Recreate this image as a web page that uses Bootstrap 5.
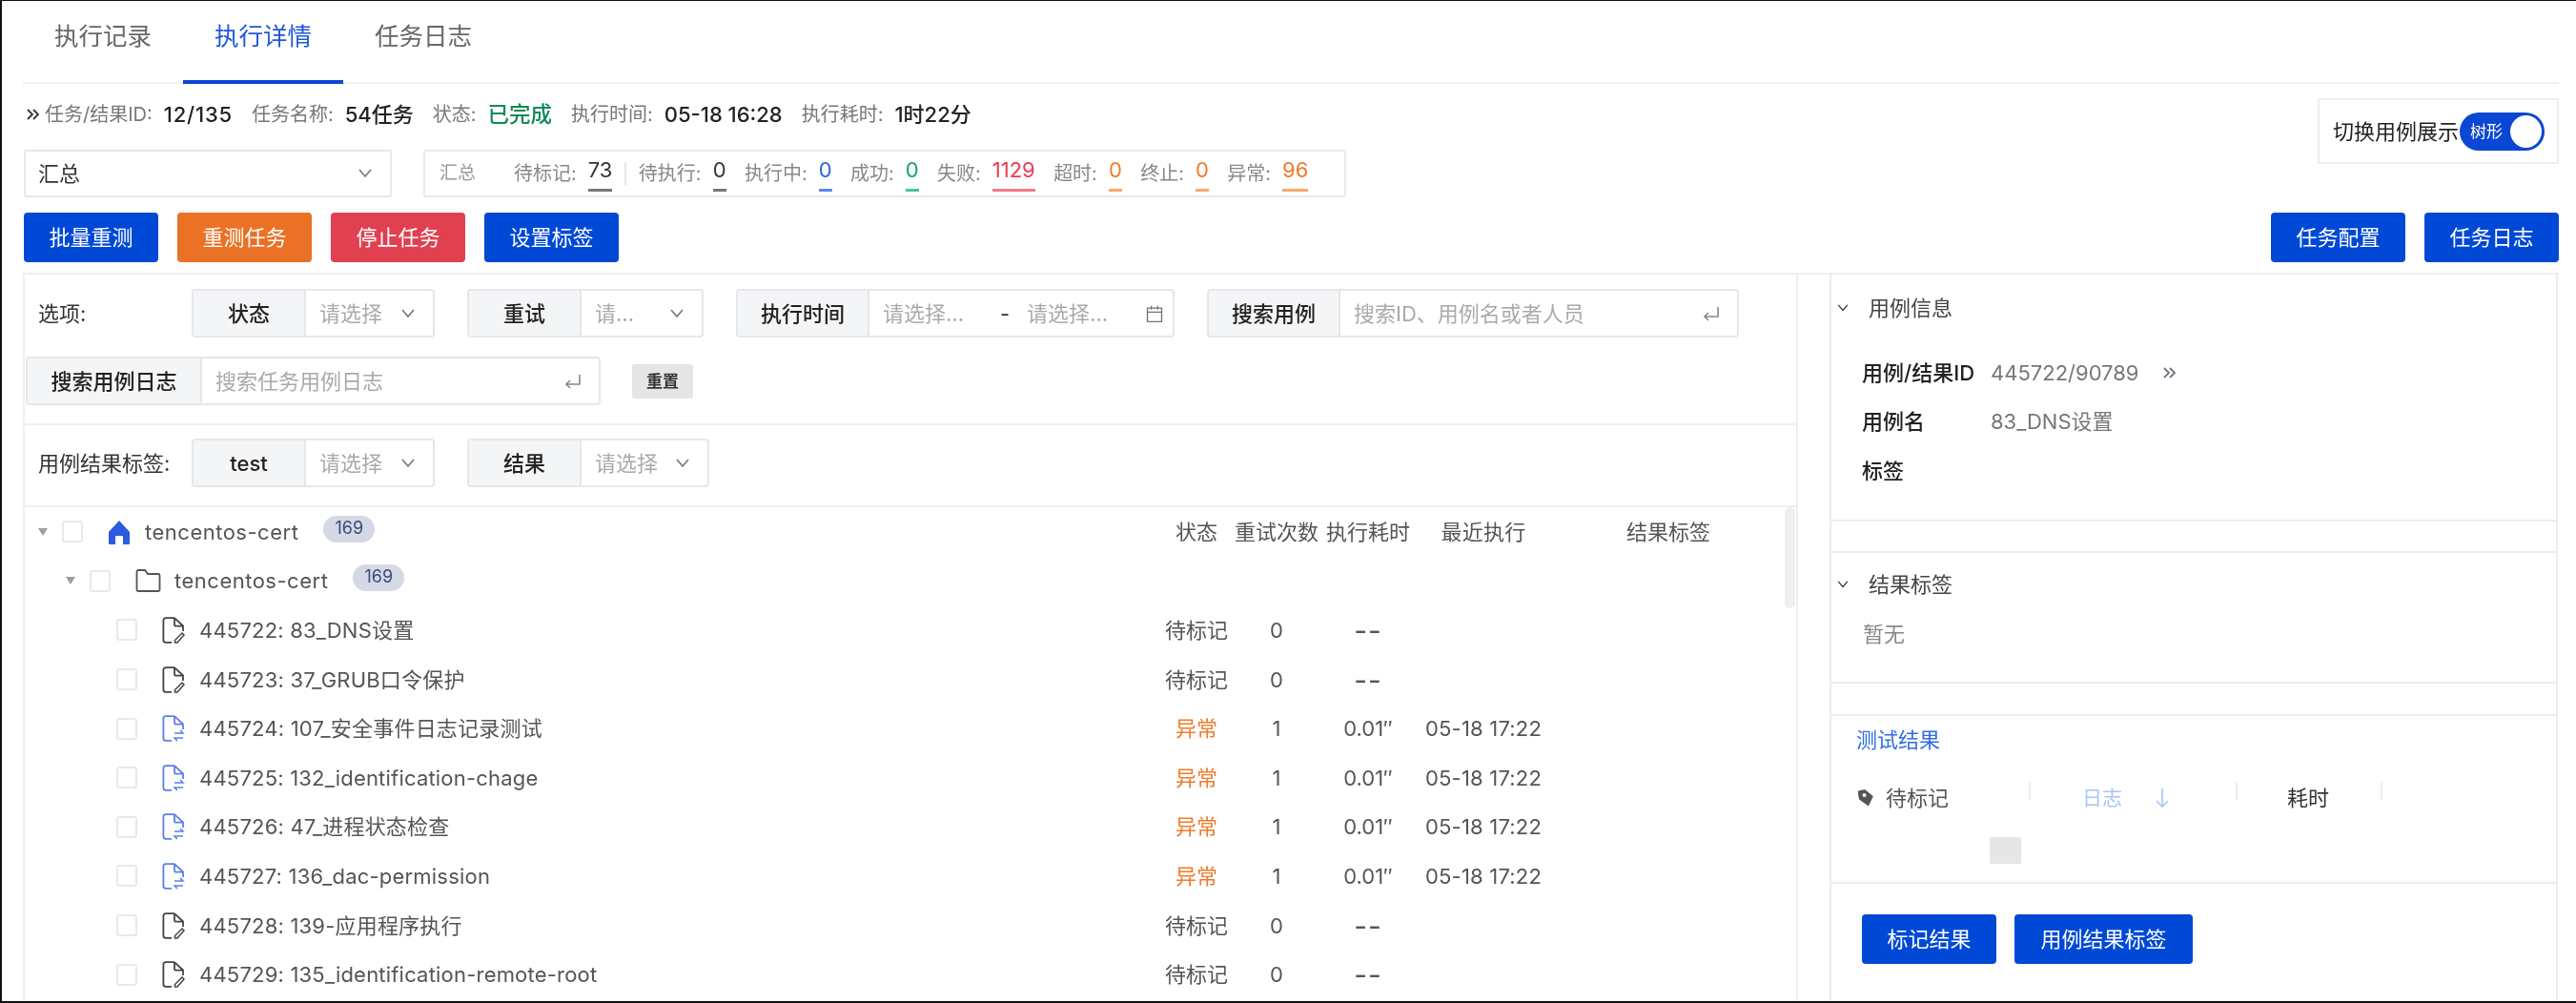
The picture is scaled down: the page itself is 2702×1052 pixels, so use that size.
<!DOCTYPE html>
<html lang="zh-CN">
<head>
<meta charset="utf-8">
<title>执行详情</title>
<link href="https://cdn.jsdelivr.net/npm/bootstrap@5.3.0/dist/css/bootstrap.min.css" rel="stylesheet">
<style>
html,body{margin:0;background:#fff;overflow:hidden}
body{font-family:Inter,"Noto Sans CJK SC",sans-serif;font-size:22px;color:#333;line-height:30px}
.frame{width:2702px;height:1052px;box-sizing:border-box;border-top:1px solid #111;border-left:2px solid #111;border-bottom:2px solid #111;padding:0 18px 0 22px;overflow:hidden;filter:blur(.55px)}
.tabbar{height:87px;border-bottom:2px solid #f0f0f0;flex-wrap:nowrap}
.tabbar .nav-link{width:168px;height:87px;padding:22px 0 0;text-align:center;font-size:25.5px;color:#666;line-height:30px;background:none;border:0;border-radius:0}
.tabbar .nav-link.active{color:#1f58d8;border-bottom:4px solid #0a47d4}
.head-zone{height:200px;border-bottom:2px solid #efefef}
.info-row{height:30px;margin-top:17px;margin-bottom:22px;font-size:20px;color:#777;padding-left:3px}
.info-row b{font-size:22px;font-weight:500;color:#222;margin:0 20px 0 12px}
.info-row b.ok{color:#128a58;font-size:22.5px}
.info-row b.v-wide{letter-spacing:.8px}
.chev-2{width:16px;height:16px;margin-right:4px;color:#333}
.sel-box{width:386px;height:50px;margin-left:1px;border:2px solid #e6e7ea;border-radius:3px;padding:0 16px 0 13px;color:#333}
.stat-box{width:968px;height:50px;margin-left:33px;border:2px solid #e9eaed;border-radius:2px;padding:0 0 0 15px;font-size:20px;color:#888}
.stat-box .first{margin-right:40px;font-size:19px;color:#999}
.stat-item{margin-right:19.4px;white-space:nowrap}
.stat-num{font-size:22px;color:#333;margin-left:12px;line-height:30px;padding-bottom:5px;border-bottom:3px solid #777}
.stat-num.c-blue{color:#2b66e0;border-color:#5b87ee}
.stat-num.c-green{color:#12a56f;border-color:#4ac49a}
.stat-num.c-red{color:#ea3c53;border-color:#f4798a}
.stat-num.c-orange{color:#f07b2c;border-color:#f9a86c}
.stat-sep{width:2px;height:24px;background:#e8e8e8;margin:0 13px 0 -7px}
.toggle-box{width:253px;height:69px;margin-top:15px;border:2px solid #eeeeee;padding:0 11px 0 14px;color:#222;white-space:nowrap}
.toggle-txt{width:133px;font-size:22px;flex:none}
.sw-pill{width:89px;height:40px;background:#0a47d4;color:#fff;font-size:17px;padding:0 3px 0 11px;flex:none}
.sw-knob{width:33px;height:34px;background:#fff;border-radius:50%;margin-left:auto}
.act-row{height:52px;margin-top:16px}
.act-btn{width:141px;height:52px;padding:0;border:0;border-radius:4px;color:#fff;font-size:22px;line-height:52px}
.act-btn:hover{color:#fff}
.b-blue{background:#0049d6}.b-orange{background:#ea7126}.b-red{background:#e04050}
.act-gap{gap:20px}
.act-left{margin-left:1px}
.main-zone{height:762px}
.left-pane{width:1862px;border-left:2px solid #f0f0f0;border-right:2px solid #eeeeee;position:relative;flex:none}
.right-pane{width:764px;margin-left:33px;border-left:2px solid #ebedf0;border-right:2px solid #ebedf0;flex:none}
.f-line{padding-left:14px;height:51px}
.f-first{margin-top:15px}
.f-second{margin-top:20px;padding-left:1px}
.f-third{margin-top:14px}
.f-lab{width:127px;color:#333;flex:none;white-space:nowrap}
.grp{height:51px;flex-wrap:nowrap;width:auto;border:2px solid #e6e7ea;border-radius:4px;overflow:hidden}
.grp-add{width:118px;height:100%;background:#f4f5f6;border-right:2px solid #e6e7ea;color:#222;font-weight:500;flex:none}
.grp-ph{color:#aaa;padding:0 14px;white-space:nowrap;flex:1 1 auto}
.grp-ph2{color:#aaa;padding:0 14px 0 18px;white-space:nowrap;flex:1 1 auto}
.w-status{width:255px}.w-retry{width:248px}.w-tag{width:255px}.w-res{width:254px}
.w-time{width:460px}.w-search{width:558px}.w-log{width:603px}
.w-add-140{width:138px}.w-add-185{width:183px}
.chev{width:20px;height:14px;color:#777;flex:none}
.ent{width:22px;height:20px;color:#888;flex:none}
.gap-g{gap:34px}
.reset{width:64px;height:36px;background:#e5e5e5;color:#333;font-size:17px;font-weight:600;border-radius:3px;margin-left:33px;border:0;padding:0;line-height:36px}
.rule{height:2px;background:#efefef}
.rule-a{margin-top:19px}
.rule-b{margin-top:19px}
.tree{position:relative}
.t-row{height:51.6px}
.t-name{width:1189px;flex:none;color:#555;white-space:nowrap;letter-spacing:.2px}
.t-root{letter-spacing:.5px}
.t-c1{width:80px;text-align:center;color:#555;flex:none}
.t-c2{width:88px;text-align:center;color:#555;flex:none}
.t-c3{width:104px;text-align:center;color:#555;flex:none}
.t-c4{width:138px;text-align:center;color:#555;flex:none;white-space:nowrap;letter-spacing:.2px}
.t-c5{width:250px;text-align:center;color:#555;flex:none}
.t-dash{font-size:30px;letter-spacing:1px}
.c-warn{color:#f07b2c}
.caret{width:0;height:0;border-left:5px solid transparent;border-right:5px solid transparent;border-top:8px solid #9a9ea6;flex:none}
.tick{width:22px;height:23px;border:2px solid #e9e9ec;border-radius:3px;background:#fff;flex:none}
.ind-0{padding-left:14px}.ind-1{padding-left:43px}.ind-2{padding-left:96px}
.gap-cb{margin-left:15px}
.ico{width:24px;height:28px;flex:none;margin-left:26px;margin-right:15px}
.ico-f{width:27px;margin-right:14px}
.pill-n{width:54px;height:28px;border-radius:14px;background:#d5d9e6;color:#3c4a78;font-size:18px;margin-left:26px;position:relative;top:-3px;line-height:26px;text-align:center;letter-spacing:0}
.scroll-thumb{position:absolute;right:1px;top:0;width:11px;height:106px;background:#efefef;border-radius:5px}
.sec-1{height:259px;border-bottom:2px solid #ebedf0;padding-top:20px}
.sec-gap1{height:31px}
.sec-gap2{height:32px}
.sec-2{height:139px;border-top:2px solid #ebedf0;border-bottom:2px solid #ebedf0;padding-top:18px}
.sec-3{height:178px;border-top:2px solid #ebedf0;border-bottom:2px solid #ebedf0;padding-top:10px}
.sec-4{padding:32px 0 0 32px}
.sec-head{padding-left:4px;gap:19px;color:#444}
.chev-s{width:16px;height:12px;color:#333;flex:none}
.kv{height:51.5px;padding-left:32px}
.kv-l{width:135px;color:#222;font-weight:500;flex:none;white-space:nowrap}
.kv-v{color:#777;white-space:nowrap}
.kv-first{margin-top:27px}
.none-txt{margin-top:22px;padding-left:33px;color:#888}
.res-title{padding-left:26px;color:#2f6ce5}
.res-row{margin-top:31px;padding-left:26px;height:30px}
.res-c1{width:181px;color:#555;gap:12px;padding-left:2px}
.res-c2{width:215px;padding-left:54px;color:#a9c5f7;font-size:21px}
.res-c3{width:150px;padding-left:52px;color:#333}
.res-vs{width:2px;height:19px;background:#eeeeee;align-self:flex-start;margin-top:-2px;flex:none}
.tag-i{width:17px;height:20px;color:#555;flex:none}
.arr-i{width:16px;height:24px;color:#a9c5f7;margin-left:34px;flex:none}
.sq{width:33px;height:28px;background:#e6e6e6;margin:26px 0 0 166px}
.b-gap{gap:19px}
.w-141{width:141px}.w-187{width:187px}
</style>
</head>
<body>
<svg class="d-none">
<symbol id="s-chev" viewBox="0 0 20 14"><path d="M4 3l6 7 6-7" fill="none" stroke="currentColor" stroke-width="1.6"/></symbol>
<symbol id="s-ent" viewBox="0 0 22 20"><path d="M18 3v10H4M8 9l-4 4 4 4" fill="none" stroke="currentColor" stroke-width="1.6"/></symbol>
<symbol id="s-dbl" viewBox="0 0 16 16"><path d="M2 3l5 5-5 5M8 3l5 5-5 5" fill="none" stroke="currentColor" stroke-width="1.8"/></symbol>
<symbol id="s-home" viewBox="0 0 24 28"><path d="M12 2L1 14v12a1 1 0 0 0 1 1h6v-8a1 1 0 0 1 1-1h6a1 1 0 0 1 1 1v8h6a1 1 0 0 0 1-1V14z" fill="#2b5ce0"/></symbol>
<symbol id="s-folder" viewBox="0 0 27 28"><path d="M1.500 4.500a1.500 1.500 0 0 1 1.500-1.500h7l3 4h11a1.500 1.500 0 0 1 1.500 1.500v15a1.500 1.500 0 0 1-1.500 1.500H3a1.500 1.500 0 0 1-1.500-1.500z" fill="none" stroke="#555" stroke-width="1.800"/></symbol>
<symbol id="s-file" viewBox="0 0 24 28"><path d="M13 1.200H4a2.600 2.600 0 0 0-2.600 2.600v20.400A2.600 2.600 0 0 0 4 26.800h6M13 1.200l9 8.300v5.500M13 1.200v6.500a2 2 0 0 0 2 2h7" fill="none" stroke="#444" stroke-width="1.800"/><path d="M21 17l2 2-7 8h-2.500v-2.500z" fill="none" stroke="#444" stroke-width="1.500"/></symbol>
<symbol id="s-fileb" viewBox="0 0 24 28"><path d="M13 1.200H4a2.600 2.600 0 0 0-2.600 2.600v20.400A2.600 2.600 0 0 0 4 26.800h6M13 1.200l9 8.300v5.500M13 1.200v6.500a2 2 0 0 0 2 2h7" fill="none" stroke="#5b80e8" stroke-width="1.800"/><path d="M13 19h9l-3-3M22 24h-9l3 3" fill="none" stroke="#5b80e8" stroke-width="1.500"/></symbol>
<symbol id="s-cal" viewBox="0 0 22 24"><path d="M2 5h18v17H2zM2 10h18M7 2v5M15 2v5" fill="none" stroke="currentColor" stroke-width="1.600"/></symbol>
<symbol id="s-tag" viewBox="0 0 17 20"><path d="M1 1h8l7 9-7 9-8-9z" fill="currentColor" transform="rotate(-12 8 10)"/><circle cx="6.500" cy="7" r="2" fill="#fff"/></symbol>
<symbol id="s-arr" viewBox="0 0 16 24"><path d="M8 2v19M2 15l6 6 6-6" fill="none" stroke="currentColor" stroke-width="1.600"/></symbol>
</svg>

<div class="frame">
  <ul class="nav tabbar">
    <li class="nav-item"><a class="nav-link" href="#">执行记录</a></li>
    <li class="nav-item"><a class="nav-link active" href="#">执行详情</a></li>
    <li class="nav-item"><a class="nav-link" href="#">任务日志</a></li>
  </ul>

  <div class="head-zone">
    <div class="d-flex justify-content-between">
      <div>
        <div class="info-row d-flex align-items-center">
          <svg class="chev-2"><use href="#s-dbl"/></svg><span>任务/结果ID:</span><b class="v-wide">12/135</b><span>任务名称:</span><b>54任务</b><span>状态:</span><b class="ok">已完成</b><span>执行时间:</span><b>05-18 16:28</b><span>执行耗时:</span><b>1时22分</b>
        </div>
        <div class="d-flex">
          <div class="sel-box d-flex align-items-center justify-content-between"><span>汇总</span><svg class="chev"><use href="#s-chev"/></svg></div>
          <div class="stat-box d-flex align-items-center">
            <span class="first">汇总</span>
            <span class="stat-item d-flex align-items-center">待标记:<span class="stat-num">73</span></span><span class="stat-sep"></span>
            <span class="stat-item d-flex align-items-center">待执行:<span class="stat-num">0</span></span>
            <span class="stat-item d-flex align-items-center">执行中:<span class="stat-num c-blue">0</span></span>
            <span class="stat-item d-flex align-items-center">成功:<span class="stat-num c-green">0</span></span>
            <span class="stat-item d-flex align-items-center">失败:<span class="stat-num c-red">1129</span></span>
            <span class="stat-item d-flex align-items-center">超时:<span class="stat-num c-orange">0</span></span>
            <span class="stat-item d-flex align-items-center">终止:<span class="stat-num c-orange">0</span></span>
            <span class="stat-item d-flex align-items-center">异常:<span class="stat-num c-orange">96</span></span>
          </div>
        </div>
      </div>
      <div class="toggle-box d-flex align-items-center">
        <span class="toggle-txt">切换用例展示</span>
        <span class="sw-pill rounded-pill d-flex align-items-center">树形<span class="sw-knob"></span></span>
      </div>
    </div>
    <div class="act-row d-flex justify-content-between">
      <div class="d-flex act-gap act-left">
        <button class="btn act-btn b-blue">批量重测</button>
        <button class="btn act-btn b-orange">重测任务</button>
        <button class="btn act-btn b-red">停止任务</button>
        <button class="btn act-btn b-blue">设置标签</button>
      </div>
      <div class="d-flex act-gap">
        <button class="btn act-btn b-blue">任务配置</button>
        <button class="btn act-btn b-blue">任务日志</button>
      </div>
    </div>
  </div>

  <div class="main-zone d-flex">
    <div class="left-pane">
      <div class="f-line f-first d-flex align-items-center gap-g">
        <span class="f-lab">选项:</span>
        <div class="grp w-status d-flex align-items-center"><span class="grp-add d-flex align-items-center justify-content-center">状态</span><span class="grp-ph">请选择</span><svg class="chev me-3"><use href="#s-chev"/></svg></div>
        <div class="grp w-retry d-flex align-items-center"><span class="grp-add d-flex align-items-center justify-content-center">重试</span><span class="grp-ph">请...</span><svg class="chev me-3"><use href="#s-chev"/></svg></div>
        <div class="grp w-time d-flex align-items-center"><span class="grp-add w-add-140 d-flex align-items-center justify-content-center">执行时间</span><span class="grp-ph">请选择...</span><span>-</span><span class="grp-ph2">请选择...</span><svg class="ent me-2 text-secondary"><use href="#s-cal"/></svg></div>
        <div class="grp w-search d-flex align-items-center"><span class="grp-add w-add-140 d-flex align-items-center justify-content-center">搜索用例</span><span class="grp-ph">搜索ID、用例名或者人员</span><svg class="ent me-3"><use href="#s-ent"/></svg></div>
      </div>
      <div class="f-second d-flex align-items-center">
        <div class="grp w-log d-flex align-items-center"><span class="grp-add w-add-185 d-flex align-items-center justify-content-center">搜索用例日志</span><span class="grp-ph">搜索任务用例日志</span><svg class="ent me-3"><use href="#s-ent"/></svg></div>
        <button class="reset">重置</button>
      </div>
      <div class="rule rule-a"></div>
      <div class="f-line f-third d-flex align-items-center gap-g">
        <span class="f-lab">用例结果标签:</span>
        <div class="grp w-tag d-flex align-items-center"><span class="grp-add d-flex align-items-center justify-content-center">test</span><span class="grp-ph">请选择</span><svg class="chev me-3"><use href="#s-chev"/></svg></div>
        <div class="grp w-res d-flex align-items-center"><span class="grp-add d-flex align-items-center justify-content-center">结果</span><span class="grp-ph">请选择</span><svg class="chev me-3"><use href="#s-chev"/></svg></div>
      </div>
      <div class="rule rule-b"></div>

      <div class="tree">
        <div class="scroll-thumb"></div>
        <div class="t-row d-flex align-items-center">
          <div class="t-name ind-0 d-flex align-items-center"><span class="caret"></span><span class="tick gap-cb"></span><svg class="ico"><use href="#s-home"/></svg><span class="t-root">tencentos-cert</span><span class="pill-n">169</span></div>
          <div class="t-c1">状态</div><div class="t-c2">重试次数</div><div class="t-c3">执行耗时</div><div class="t-c4">最近执行</div><div class="t-c5">结果标签</div>
        </div>
        <div class="t-row d-flex align-items-center">
          <div class="t-name ind-1 d-flex align-items-center"><span class="caret"></span><span class="tick gap-cb"></span><svg class="ico ico-f"><use href="#s-folder"/></svg><span class="t-root">tencentos-cert</span><span class="pill-n">169</span></div>
        </div>
        <div class="t-row d-flex align-items-center">
          <div class="t-name ind-2 d-flex align-items-center"><span class="tick"></span><svg class="ico"><use href="#s-file"/></svg><span>445722: 83_DNS设置</span></div>
          <div class="t-c1">待标记</div><div class="t-c2">0</div><div class="t-c3 t-dash">--</div><div class="t-c4"></div><div class="t-c5"></div>
        </div>
        <div class="t-row d-flex align-items-center">
          <div class="t-name ind-2 d-flex align-items-center"><span class="tick"></span><svg class="ico"><use href="#s-file"/></svg><span>445723: 37_GRUB口令保护</span></div>
          <div class="t-c1">待标记</div><div class="t-c2">0</div><div class="t-c3 t-dash">--</div><div class="t-c4"></div><div class="t-c5"></div>
        </div>
        <div class="t-row d-flex align-items-center">
          <div class="t-name ind-2 d-flex align-items-center"><span class="tick"></span><svg class="ico"><use href="#s-fileb"/></svg><span>445724: 107_安全事件日志记录测试</span></div>
          <div class="t-c1 c-warn">异常</div><div class="t-c2">1</div><div class="t-c3">0.01″</div><div class="t-c4">05-18 17:22</div><div class="t-c5"></div>
        </div>
        <div class="t-row d-flex align-items-center">
          <div class="t-name ind-2 d-flex align-items-center"><span class="tick"></span><svg class="ico"><use href="#s-fileb"/></svg><span>445725: 132_identification-chage</span></div>
          <div class="t-c1 c-warn">异常</div><div class="t-c2">1</div><div class="t-c3">0.01″</div><div class="t-c4">05-18 17:22</div><div class="t-c5"></div>
        </div>
        <div class="t-row d-flex align-items-center">
          <div class="t-name ind-2 d-flex align-items-center"><span class="tick"></span><svg class="ico"><use href="#s-fileb"/></svg><span>445726: 47_进程状态检查</span></div>
          <div class="t-c1 c-warn">异常</div><div class="t-c2">1</div><div class="t-c3">0.01″</div><div class="t-c4">05-18 17:22</div><div class="t-c5"></div>
        </div>
        <div class="t-row d-flex align-items-center">
          <div class="t-name ind-2 d-flex align-items-center"><span class="tick"></span><svg class="ico"><use href="#s-fileb"/></svg><span>445727: 136_dac-permission</span></div>
          <div class="t-c1 c-warn">异常</div><div class="t-c2">1</div><div class="t-c3">0.01″</div><div class="t-c4">05-18 17:22</div><div class="t-c5"></div>
        </div>
        <div class="t-row d-flex align-items-center">
          <div class="t-name ind-2 d-flex align-items-center"><span class="tick"></span><svg class="ico"><use href="#s-file"/></svg><span>445728: 139-应用程序执行</span></div>
          <div class="t-c1">待标记</div><div class="t-c2">0</div><div class="t-c3 t-dash">--</div><div class="t-c4"></div><div class="t-c5"></div>
        </div>
        <div class="t-row d-flex align-items-center">
          <div class="t-name ind-2 d-flex align-items-center"><span class="tick"></span><svg class="ico"><use href="#s-file"/></svg><span>445729: 135_identification-remote-root</span></div>
          <div class="t-c1">待标记</div><div class="t-c2">0</div><div class="t-c3 t-dash">--</div><div class="t-c4"></div><div class="t-c5"></div>
        </div>
      </div>
    </div>

    <div class="right-pane">
      <div class="sec-1">
        <div class="sec-head d-flex align-items-center"><svg class="chev-s"><use href="#s-chev"/></svg><span>用例信息</span></div>
        <div class="kv kv-first d-flex align-items-center"><span class="kv-l">用例/结果ID</span><span class="kv-v">445722/90789</span><svg class="chev-2 ms-4 text-secondary"><use href="#s-dbl"/></svg></div>
        <div class="kv d-flex align-items-center"><span class="kv-l">用例名</span><span class="kv-v">83_DNS设置</span></div>
        <div class="kv d-flex align-items-center"><span class="kv-l">标签</span></div>
      </div>
      <div class="sec-gap1"></div>
      <div class="sec-2">
        <div class="sec-head d-flex align-items-center"><svg class="chev-s"><use href="#s-chev"/></svg><span>结果标签</span></div>
        <div class="none-txt">暂无</div>
      </div>
      <div class="sec-gap2"></div>
      <div class="sec-3">
        <div class="res-title">测试结果</div>
        <div class="res-row d-flex align-items-center">
          <div class="res-c1 d-flex align-items-center"><svg class="tag-i"><use href="#s-tag"/></svg><span>待标记</span></div>
          <span class="res-vs"></span>
          <div class="res-c2 d-flex align-items-center"><span>日志</span><svg class="arr-i"><use href="#s-arr"/></svg></div>
          <span class="res-vs"></span>
          <div class="res-c3">耗时</div>
          <span class="res-vs"></span>
        </div>
        <div class="sq"></div>
      </div>
      <div class="sec-4 d-flex b-gap">
        <button class="btn act-btn b-blue w-141">标记结果</button>
        <button class="btn act-btn b-blue w-187">用例结果标签</button>
      </div>
    </div>
  </div>
</div>
<script src="https://cdn.jsdelivr.net/npm/bootstrap@5.3.0/dist/js/bootstrap.bundle.min.js"></script>
</body>
</html>
